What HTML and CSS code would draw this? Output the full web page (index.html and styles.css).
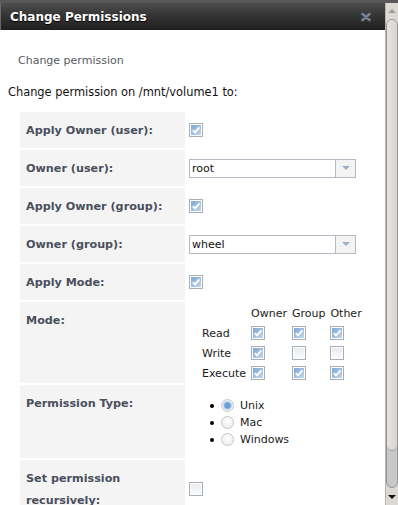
FILE: index.html
```html
<!DOCTYPE html>
<html lang="en">
<head>
    <meta charset="UTF-8">
    <title>Change Permissions</title>
    <link rel="stylesheet" href="styles.css">
</head>
<body>
    <div class="window">
        <div class="main">
            <div class="titlebar">
                <span class="title">Change Permissions</span>
                <svg class="close" width="12" height="10" viewBox="0 0 12 10">
                    <path d="M2.5 2 L9.5 8 M9.5 2 L2.5 8" stroke="#4f5761" stroke-width="3.4" stroke-linecap="round" fill="none"/>
                    <path d="M2.5 2 L9.5 8 M9.5 2 L2.5 8" stroke="#7c8895" stroke-width="1.8" stroke-linecap="round" fill="none"/>
                </svg>
            </div>
            <div class="content">
                <p class="tab">Change permission</p>
                <p class="intro">Change permission on /mnt/volume1 to:</p>
                <table class="form">
                    <tr>
                        <th>Apply Owner (user):</th>
                        <td><span class="cb checked"><svg viewBox="0 0 10 10"><path d="M1.8 5.2 L4 7.4 L8.4 2.4"/></svg></span></td>
                    </tr>
                    <tr>
                        <th>Owner (user):</th>
                        <td><div class="select"><span class="val">root</span><span class="arrow"></span></div></td>
                    </tr>
                    <tr>
                        <th>Apply Owner (group):</th>
                        <td><span class="cb checked"><svg viewBox="0 0 10 10"><path d="M1.8 5.2 L4 7.4 L8.4 2.4"/></svg></span></td>
                    </tr>
                    <tr>
                        <th>Owner (group):</th>
                        <td><div class="select"><span class="val">wheel</span><span class="arrow"></span></div></td>
                    </tr>
                    <tr>
                        <th>Apply Mode:</th>
                        <td><span class="cb checked"><svg viewBox="0 0 10 10"><path d="M1.8 5.2 L4 7.4 L8.4 2.4"/></svg></span></td>
                    </tr>
                    <tr>
                        <th>Mode:</th>
                        <td>
                            <div class="mode">
                                <span></span><span>Owner</span><span>Group</span><span>Other</span>
                                <span>Read</span>
                                <span class="cb checked"><svg viewBox="0 0 10 10"><path d="M1.8 5.2 L4 7.4 L8.4 2.4"/></svg></span>
                                <span class="cb checked"><svg viewBox="0 0 10 10"><path d="M1.8 5.2 L4 7.4 L8.4 2.4"/></svg></span>
                                <span class="cb checked"><svg viewBox="0 0 10 10"><path d="M1.8 5.2 L4 7.4 L8.4 2.4"/></svg></span>
                                <span>Write</span>
                                <span class="cb checked"><svg viewBox="0 0 10 10"><path d="M1.8 5.2 L4 7.4 L8.4 2.4"/></svg></span>
                                <span class="cb"></span>
                                <span class="cb"></span>
                                <span>Execute</span>
                                <span class="cb checked"><svg viewBox="0 0 10 10"><path d="M1.8 5.2 L4 7.4 L8.4 2.4"/></svg></span>
                                <span class="cb checked"><svg viewBox="0 0 10 10"><path d="M1.8 5.2 L4 7.4 L8.4 2.4"/></svg></span>
                                <span class="cb checked"><svg viewBox="0 0 10 10"><path d="M1.8 5.2 L4 7.4 L8.4 2.4"/></svg></span>
                            </div>
                        </td>
                    </tr>
                    <tr>
                        <th>Permission Type:</th>
                        <td>
                            <ul class="types">
                                <li><span class="radio checked"></span>Unix</li>
                                <li><span class="radio"></span>Mac</li>
                                <li><span class="radio"></span>Windows</li>
                            </ul>
                        </td>
                    </tr>
                    <tr>
                        <th>Set permission recursively:</th>
                        <td><span class="cb"></span></td>
                    </tr>
                </table>
            </div>
        </div>
        <div class="scrollbar">
            <div class="sb-up"></div>
            <div class="sb-track"><div class="sb-thumb"></div></div>
            <div class="sb-down"></div>
        </div>
    </div>
</body>
</html>
```

FILE: styles.css
```css
body {
    margin: 0;
    background: #fff;
    font-family: "DejaVu Sans", Verdana, sans-serif;
}
.window {
    display: flex;
    height: 505px;
    box-sizing: border-box;
    border-top: 3px solid #585858;
    overflow: hidden;
}
.main {
    flex: 1;
    overflow: hidden;
}
.titlebar {
    height: 27px;
    display: flex;
    align-items: center;
    justify-content: space-between;
    padding: 0 13px 0 10px;
    border-left: 1px solid #6a6a6a;
    background: linear-gradient(#4d4d4d, #333 50%, #1f1f1f);
}
.title {
    color: #fff;
    font-weight: bold;
    font-size: 12px;
    margin-left: -1px;
    text-shadow: 0 1px 1px #000;
}
.close {
    display: block;
    margin-top: 1px;
}
.content {
    padding-bottom: 20px;
}
.tab {
    margin: 24px 0 0 18px;
    font-size: 11px;
    line-height: 14px;
    color: #575b62;
}
.intro {
    margin: 17px 0 0 8px;
    font-size: 11.4px;
    line-height: 14px;
    color: #111;
}
.form {
    border-spacing: 0 2px;
    margin: 11px 0 0 20px;
}
.form th {
    width: 153px;
    padding: 8px 6px 6px;
    text-align: left;
    vertical-align: top;
    background: #f4f4f4;
    font-size: 11.2px;
    line-height: 22px;
    color: #4a4f5c;
}
.form td {
    padding: 0 0 0 4px;
    vertical-align: middle;
}
.cb {
    display: block;
    width: 14px;
    height: 14px;
    box-sizing: border-box;
    border: 1px solid #a9aeb6;
    padding: 1px;
    background: linear-gradient(#e8ebf0, #fafbfc) content-box, #fff;
}
.cb.checked {
    background: linear-gradient(to bottom right, #7ea6cf, #c0d7ed) content-box, #fff;
}
.cb svg {
    display: block;
    width: 10px;
    height: 10px;
}
.cb path {
    fill: none;
    stroke: #fff;
    stroke-width: 1.8;
}
.select {
    display: flex;
    width: 167px;
    height: 19px;
    box-sizing: border-box;
    border: 1px solid #b4b9c4;
    background: #fff;
}
.select .val {
    flex: 1;
    padding-left: 2px;
    font-size: 11px;
    line-height: 17px;
    color: #111;
}
.select .arrow {
    width: 19px;
    border-left: 1px solid #b4b9c4;
    background: #f3f3f3;
    display: flex;
    align-items: center;
    justify-content: center;
}
.select .arrow::before {
    content: "";
    border-top: 4px solid #9cadc6;
    border-left: 4px solid transparent;
    border-right: 4px solid transparent;
}
.mode {
    display: grid;
    grid-template-columns: auto auto auto auto;
    grid-auto-rows: 20px;
    column-gap: 5px;
    align-items: center;
    justify-content: start;
    margin: 1px 0 0 13px;
    font-size: 11px;
    color: #1a1a1a;
}
.types {
    list-style: none;
    margin: 12px 0 10px;
    padding: 0;
    font-size: 11px;
    color: #1a1a1a;
}
.types li {
    display: flex;
    align-items: center;
    height: 17px;
    padding-left: 21px;
}
.types li::before {
    content: "";
    width: 4px;
    height: 4px;
    border-radius: 50%;
    background: #000;
    margin-right: 7px;
}
.radio {
    width: 13px;
    height: 13px;
    box-sizing: border-box;
    border-radius: 50%;
    border: 1px solid #c3c7cd;
    background: radial-gradient(circle at 50% 40%, #fff, #e6e9ed);
    margin-right: 6px;
}
.radio.checked {
    background: radial-gradient(circle, #6b9fd3 0 2.5px, #a6c5e5 3.5px, #eef3f9 5px);
}
.scrollbar {
    width: 13px;
    display: flex;
    flex-direction: column;
    background: #dcd8d4;
    border-left: 1px solid #b8b4b0;
    box-sizing: border-box;
}
.sb-up,
.sb-down {
    display: flex;
    align-items: center;
    justify-content: center;
}
.sb-up {
    height: 16px;
}
.sb-up::before {
    content: "";
    border-bottom: 4px solid #a09c98;
    border-left: 4px solid transparent;
    border-right: 4px solid transparent;
}
.sb-down {
    height: 17px;
}
.sb-down::before {
    content: "";
    border-top: 4px solid #111;
    border-left: 4px solid transparent;
    border-right: 4px solid transparent;
}
.sb-track {
    flex: 1;
    border: 1px solid #959595;
    border-radius: 6px;
    background: #c8c8c8;
}
.sb-thumb {
    height: 430px;
    border-bottom: 1px solid #959595;
    border-radius: 6px;
    background: linear-gradient(to right, #e6e3e0, #d8d4d0);
}
```
